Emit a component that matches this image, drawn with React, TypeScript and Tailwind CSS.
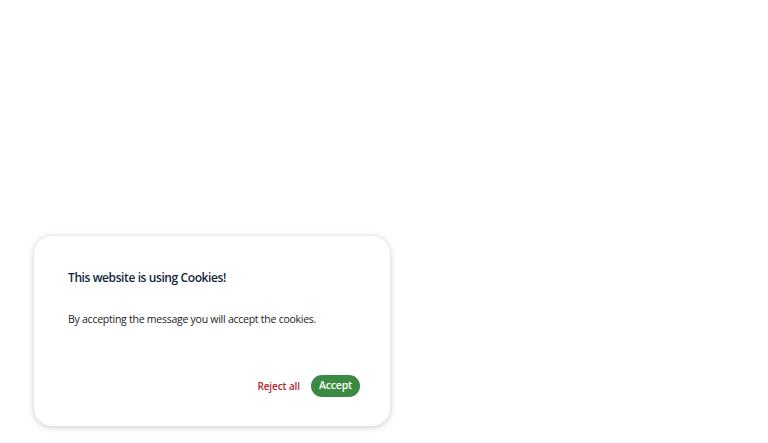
import React from 'react';

const CookieBanner: React.FC = () => {
  return (
    <div className="w-[356px] rounded-[18px] bg-white shadow-[0_1px_6px_rgba(0,0,0,0.22)] pl-[34px] pr-[30px] pt-[33px] pb-[29px]">
      <h2 className="text-[12px] leading-[18px] font-semibold tracking-[-0.4px] text-[#13263d]">
        This website is using Cookies!
      </h2>
      <p className="mt-[24px] text-[10.5px] leading-[16px] tracking-[-0.25px] text-[#222]">
        By accepting the message you will accept the cookies.
      </p>
      <div className="mt-[48px] flex items-center justify-end gap-[11px]">
        <button className="text-[10px] font-semibold tracking-[-0.1px] text-[#b3272d]">Reject all</button>
        <button className="h-[22px] w-[49px] rounded-full bg-[#3a8b41] text-[10.5px] font-semibold tracking-[-0.2px] text-white">
          Accept
        </button>
      </div>
    </div>
  );
};

export default function App() {
  return (
    <div className="h-[443px] w-[768px] bg-white flex flex-col justify-end pl-[34px] pb-[17px] font-['Open_Sans',sans-serif]">
      <CookieBanner />
    </div>
  );
}
